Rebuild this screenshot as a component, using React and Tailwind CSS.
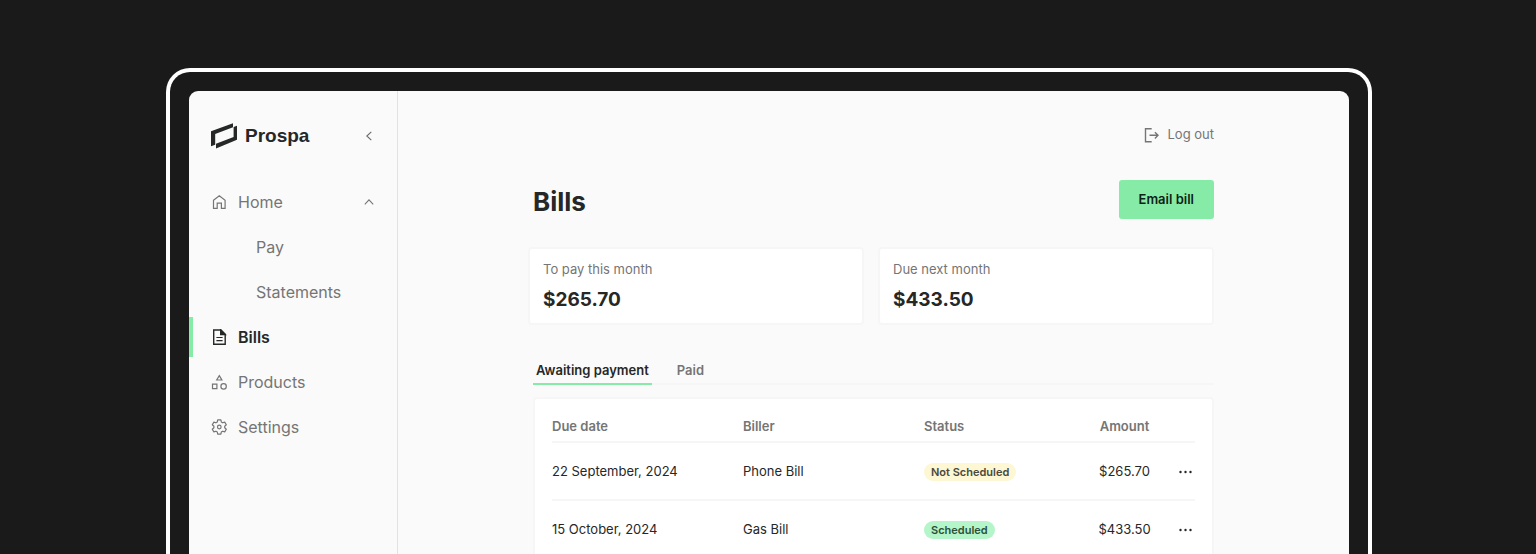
import React, { useState } from 'react';

const HomeIcon = () => (
  <svg className="h-4 w-4" viewBox="0 0 16 16" fill="none" stroke="currentColor" strokeWidth="1.2">
    <path d="M2.5 6.2 8.3 1.8l5.8 4.4v8.2h-3.7V9.2H6.2v5.2H2.5z" />
  </svg>
);

const BillsIcon = () => (
  <svg className="h-4 w-4" viewBox="0 0 16 16" fill="none" stroke="currentColor" strokeWidth="1.4">
    <path d="M2.7 1h7.2l4.3 4.3v9.9H2.7z" />
    <path d="M9.7 1v4.5h4.5z" fill="currentColor" />
    <path d="M5.4 8.5h6.2M5.4 11.6h6.2" strokeWidth="1.2" />
  </svg>
);

const ProductsIcon = () => (
  <svg className="h-4 w-4" viewBox="0 0 16 16" fill="none" stroke="currentColor" strokeWidth="1.2">
    <path d="M8.3 1.6 10.9 6H5.7z" />
    <path d="M1.5 10.2h4.4v4.4H1.5z" />
    <circle cx="12.6" cy="12.4" r="2.7" />
  </svg>
);

const SettingsIcon = () => (
  <svg className="h-4 w-4" viewBox="0 0 16 16" fill="none" stroke="currentColor" strokeWidth="1.2" strokeLinejoin="round">
    <path d="M6.7.9h3.2l.4 2.1 1.4.8 2-.7 1.6 2.7-1.6 1.4v1.6l1.6 1.4-1.6 2.7-2-.7-1.4.8-.4 2.1H6.7L6.3 13l-1.4-.8-2 .7-1.6-2.7 1.6-1.4V7.2L1.3 5.8l1.6-2.7 2 .7L6.3 3z" />
    <circle cx="8.3" cy="8" r="1.8" />
  </svg>
);

const LogoutIcon = () => (
  <svg className="h-4 w-4" viewBox="0 0 16 16" fill="none" stroke="currentColor" strokeWidth="1.4">
    <path d="M8.7 1.7H2.5v13h6.2" />
    <path d="M6.5 8.3H15M11.9 5.2 15 8.3l-3.1 3.1" />
  </svg>
);

const Chevron = ({ className }) => (
  <svg className={className} viewBox="0 0 10 10" fill="none" stroke="currentColor" strokeWidth="1.1">
    <path d="M.8 7.3 5 2.8l4.2 4.5" />
  </svg>
);

const Logo = () => (
  <a href="#home" className="flex items-center gap-2 text-[#262727]">
    <svg className="h-[26px] w-[26px]" viewBox="0 0 26 26" fill="currentColor">
      <path d="M0 8.3 22 .3v4L4.2 11v10.7L0 23.2z" />
      <path d="M22.6 3.9 26.6 2.4v14L5 25.4v-4.7L22.6 14z" />
    </svg>
    <span className="font-['Liberation_Sans',sans-serif] text-[19px] font-bold">Prospa</span>
  </a>
);

const navItems = [
  { label: 'Home', icon: HomeIcon, expanded: true },
  { label: 'Pay', child: true },
  { label: 'Statements', child: true },
  { label: 'Bills', icon: BillsIcon, active: true },
  { label: 'Products', icon: ProductsIcon },
  { label: 'Settings', icon: SettingsIcon },
];

const summary = [
  { label: 'To pay this month', amount: '$265.70' },
  { label: 'Due next month', amount: '$433.50' },
];

const bills = [
  { date: '22 September, 2024', biller: 'Phone Bill', status: 'Not Scheduled', amount: '$265.70' },
  { date: '15 October, 2024', biller: 'Gas Bill', status: 'Scheduled', amount: '$433.50' },
];

const Sidebar = () => (
  <aside className="w-[209px] shrink-0 border-r border-[#e2e2e2] pt-[29px]">
    <div className="flex h-8 items-center justify-between pr-[23px] pl-[22px]">
      <Logo />
      <button type="button" aria-label="Collapse menu" className="text-[#6b6b6b]">
        <Chevron className="h-[10px] w-[10px] -rotate-90" />
      </button>
    </div>
    <nav className="mt-[30px] flex flex-col gap-[5px]">
      {navItems.map(({ label, icon: Icon, active, child, expanded }) => (
        <a
          key={label}
          href={`#${label.toLowerCase()}`}
          className={`flex h-10 items-center border-l-4 pr-[23px] text-base ${
            active ? 'border-[#87eba8] font-semibold text-[#262727]' : 'border-transparent text-[#757575]'
          } ${child ? 'pl-[63px]' : 'pl-[18px]'}`}
        >
          {Icon && <Icon />}
          <span className={child ? '' : 'ml-[11px]'}>{label}</span>
          {expanded && <Chevron className="ml-auto h-[10px] w-[10px]" />}
        </a>
      ))}
    </nav>
  </aside>
);

const BillsTable = () => (
  <div className="mt-3 ml-[5px] rounded-sm border-2 border-[#f6f6f6] bg-white px-[17px] pt-[11px]">
    <table className="w-full table-fixed text-[13px] text-[#262727]">
      <thead>
        <tr className="h-8 border-b-2 border-[#f6f6f6] text-left text-[#757575]">
          <th className="w-[191px] pt-[2px] font-semibold">Due date</th>
          <th className="w-[181px] pt-[2px] font-semibold">Biller</th>
          <th className="pt-[2px] font-semibold">Status</th>
          <th className="w-[105px] pt-[2px] text-center font-semibold">Amount</th>
          <th className="w-[18px]" aria-label="Actions"></th>
        </tr>
      </thead>
      <tbody>
        {bills.map((bill) => (
          <tr key={bill.date} className="h-[58px] border-b-2 border-[#f6f6f6]">
            <td className="pt-[2px]">{bill.date}</td>
            <td className="pt-[2px]">{bill.biller}</td>
            <td className="pt-[2px]">
              <span
                className={`inline-block rounded-full px-[7px] text-[11px] leading-[18px] font-semibold ${
                  bill.status === 'Scheduled' ? 'bg-[#b5f5ca] text-[#2c5039]' : 'bg-[#fdf7d3] text-[#4a493d]'
                }`}
              >
                {bill.status}
              </span>
            </td>
            <td className="pt-[2px] text-center">{bill.amount}</td>
            <td className="pt-[2px]">
              <button type="button" aria-label={`Actions for ${bill.biller}`} className="block">
                <svg className="h-4 w-4" viewBox="0 0 16 16" fill="currentColor">
                  <circle cx="3.5" cy="8" r="1.2" />
                  <circle cx="8.5" cy="8" r="1.2" />
                  <circle cx="13.5" cy="8" r="1.2" />
                </svg>
              </button>
            </td>
          </tr>
        ))}
      </tbody>
    </table>
  </div>
);

const App = () => {
  const [tab, setTab] = useState('Awaiting payment');

  return (
    <div className="flex h-screen justify-center overflow-hidden bg-[#1a1a1a] pt-[68px] pl-[2px] font-['Inter',sans-serif]">
      <div className="flex w-full max-w-[1206px] rounded-t-[24px] border-4 border-b-0 border-white px-[19px] pt-[19px]">
        <div className="flex flex-1 overflow-hidden rounded-t-[9px] bg-[#fafafa]">
          <Sidebar />
          <main className="flex-1 pt-[34px] pr-[135px] pl-[130px]">
            <div className="flex justify-end">
              <button type="button" className="flex h-5 items-center gap-2 text-[13px] text-[#757575]">
                <LogoutIcon /> Log out
              </button>
            </div>

            <div className="mt-[35px] flex items-end justify-between pl-[5px]">
              <h1 className="text-[26px] leading-[34px] font-bold text-[#262727]">Bills</h1>
              <button type="button" className="h-[39px] rounded-[3px] bg-[#87eba8] px-5 text-[13px] font-semibold text-[#0f1f15]">
                Email bill
              </button>
            </div>

            <div className="mt-7 grid grid-cols-2 gap-[14px]">
              {summary.map((item) => (
                <div key={item.label} className="rounded-sm border-2 border-[#f6f6f6] bg-white px-[13px] pt-[10px] pb-2">
                  <p className="text-[13px] leading-5 text-[#757575]">{item.label}</p>
                  <p className="mt-[5px] text-[19px] leading-[31px] font-bold text-[#262727]">{item.amount}</p>
                </div>
              ))}
            </div>

            <div role="tablist" className="mt-[30px] ml-[5px] flex gap-[22px] border-b-2 border-[#f6f6f6]">
              {['Awaiting payment', 'Paid'].map((name) => (
                <button
                  key={name}
                  type="button"
                  role="tab"
                  aria-selected={tab === name}
                  onClick={() => setTab(name)}
                  className={`-mb-[2px] border-b-2 px-[3px] pt-1 pb-[2px] text-[13px] leading-[22px] font-semibold ${
                    tab === name ? 'border-[#87eba8] text-[#262727]' : 'border-transparent text-[#757575]'
                  }`}
                >
                  {name}
                </button>
              ))}
            </div>

            <BillsTable />
          </main>
        </div>
      </div>
    </div>
  );
};

export default App;
